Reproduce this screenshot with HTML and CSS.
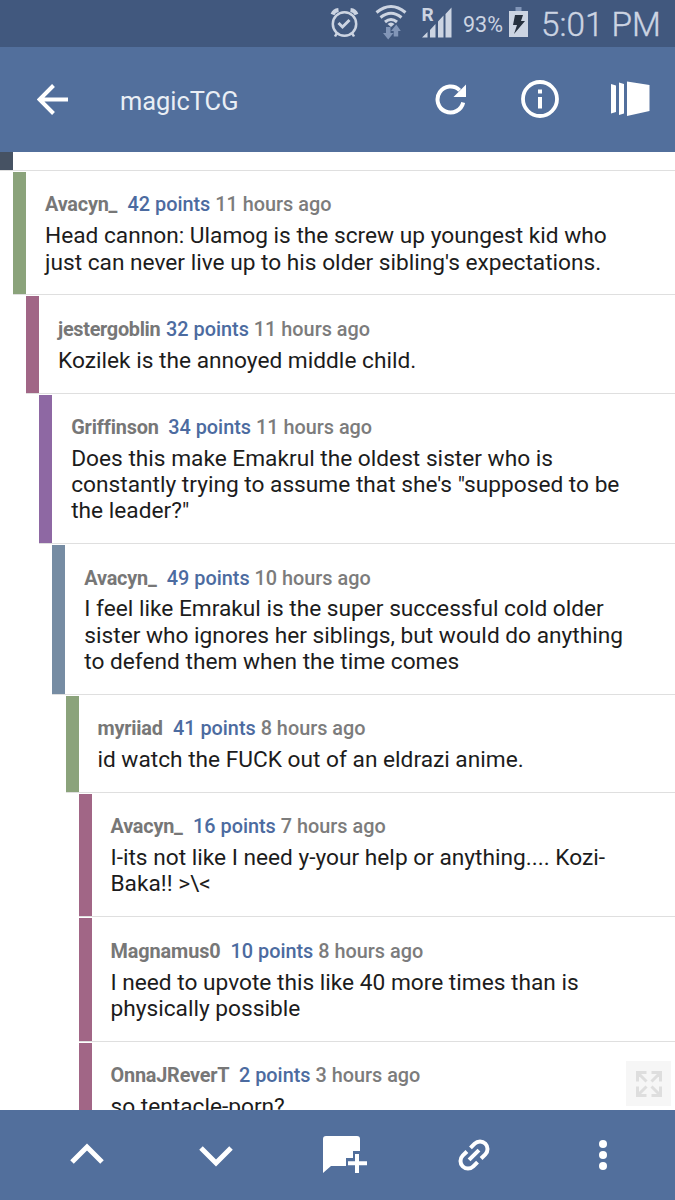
FILE: index.html
```html
<!DOCTYPE html>
<html lang="en">
<head>
<meta charset="utf-8">
<title>magicTCG</title>
<link rel="stylesheet" href="styles.css">
</head>
<body>
<div class="screen">
  <div class="status">
    <svg class="status-icons" width="136" height="47" viewBox="0 0 136 47" fill="none">
      <g stroke="#ccd4e2" stroke-width="2.5">
        <circle cx="24.500" cy="24" r="11.700"/>
        <path d="M18.500 23l4 4 7-7" stroke-width="3"/>
        <path d="M17 33l-2 3.500M32 33l2 3.500"/>
        <path d="M12.500 14.500q1.500-4 6-4.500M30.500 10q4.500.5 6 4.500" stroke-width="4"/>
        <path d="M56.500 12.500q14.500-12 29 0M60.500 17.500q10.500-8.500 21 0M65 22q6-5 12 0" stroke-width="3"/>
      </g>
      <path d="M67.500 24q3.500-3 7 0l-3.500 3z" fill="#ccd4e2"/>
      <path d="M66 27h4.500v6h3l-5.300 6.500-5.200-6.500h3zM76.300 24.500l4.500 6.500h-2.600v5.500h-4.500V31H71z" fill="#8296b8"/>
      <path d="M102 37.500l5.500-5.500v5.500zM110 30l5.500-6v13.500h-5.500zM118 21.500l5.500-6v22h-5.500zM125.500 14l6-6.500v30h-6z" fill="#ccd4e2"/>
      <text x="101.500" y="20.500" class="roaming">R</text>
    </svg>
    <span class="percent">93%</span>
    <svg class="battery" width="20" height="32" viewBox="0 0 20 32"><path d="M6.500 0h6v4h-6z" fill="#8296b8"/><path d="M0 4h19v26H0z" fill="#ccd4e2"/><path d="M6 8h8l-2 6h4L5 27l3-9H4z" fill="#26303e"/></svg>
    <span class="clock">5:01 PM</span>
  </div>
  <header class="topbar">
    <svg class="back" width="32" height="32" viewBox="0 0 32 32" fill="none" stroke="#fff" stroke-width="4"><path d="M31 15.500H4M16.500 1.500l-14 14 14 14"/></svg>
    <h1 class="title">magicTCG</h1>
    <svg class="refresh" width="32" height="32" viewBox="0 0 32 32"><path d="M28.200 18.500A13 13 0 1 1 24.700 6.300" fill="none" stroke="#fff" stroke-width="4"/><path d="M31 .5V13H18.500z" fill="#fff"/></svg>
    <svg class="info" width="38" height="38" viewBox="0 0 38 38"><circle cx="19" cy="19" r="17" fill="none" stroke="#fff" stroke-width="3.800"/><path d="M17 9.500h4v4h-4zM17 17h4v11.500h-4z" fill="#fff"/></svg>
    <svg class="pages" width="39" height="36" viewBox="0 0 39 36" fill="#fff"><path d="M0 3l5 1.500V31l-5 1.500zM8 1.500l5 1.500v29.500L8 34zM16 .5L38.500 4v26L16 35z"/></svg>
  </header>
  <main class="thread">
    <div class="tail"><i class="bar slate"></i></div>
    <article class="comment d1"><i class="bar green"></i><div class="content"><p class="meta"><b class="name n1">Avacyn_</b><span class="points">42 points</span> 11 hours ago</p><p class="text">Head cannon: Ulamog is the screw up youngest kid who<br>just can never live up to his older sibling's expectations.</p></div></article>
    <article class="comment d2"><i class="bar rose"></i><div class="content"><p class="meta"><b class="name n2">jestergoblin</b><span class="points">32 points</span> 11 hours ago</p><p class="text">Kozilek is the annoyed middle child.</p></div></article>
    <article class="comment d3"><i class="bar violet"></i><div class="content"><p class="meta"><b class="name n3">Griffinson</b><span class="points">34 points</span> 11 hours ago</p><p class="text">Does this make Emakrul the oldest sister who is<br>constantly trying to assume that she's "supposed to be<br>the leader?"</p></div></article>
    <article class="comment d4"><i class="bar blue"></i><div class="content"><p class="meta"><b class="name n1">Avacyn_</b><span class="points">49 points</span> 10 hours ago</p><p class="text">I feel like Emrakul is the super successful cold older<br>sister who ignores her siblings, but would do anything<br>to defend them when the time comes</p></div></article>
    <article class="comment d5"><i class="bar green"></i><div class="content"><p class="meta"><b class="name n4">myriiad</b><span class="points">41 points</span> 8 hours ago</p><p class="text">id watch the FUCK out of an eldrazi anime.</p></div></article>
    <article class="comment d6"><i class="bar rose"></i><div class="content"><p class="meta"><b class="name n1">Avacyn_</b><span class="points">16 points</span> 7 hours ago</p><p class="text">I-its not like I need y-your help or anything.... Kozi-<br>Baka!! &gt;\&lt;</p></div></article>
    <article class="comment d6"><i class="bar rose"></i><div class="content"><p class="meta"><b class="name n5">Magnamus0</b><span class="points">10 points</span> 8 hours ago</p><p class="text">I need to upvote this like 40 more times than is<br>physically possible</p></div></article>
    <article class="comment d6"><i class="bar rose"></i><div class="content"><p class="meta"><b class="name n6">OnnaJReverT</b><span class="points">2 points</span> 3 hours ago</p><p class="text">so tentacle-porn?</p></div></article>
    <div class="expand"><svg width="26" height="26" viewBox="0 0 26 26" fill="none" stroke="#dedede" stroke-width="3"><path d="M1.500 10.500v-9h9M1.500 1.500l9 9M15.500 1.500h9v9M24.500 1.500l-9 9M1.500 15.500v9h9M1.500 24.500l9-9M15.500 24.500h9v-9M24.500 24.500l-9-9"/></svg></div>
  </main>
  <nav class="bottombar">
    <svg width="36" height="22" viewBox="0 0 36 22" class="up"><path d="M3 19L18 4l15 15" fill="none" stroke="#fff" stroke-width="5"/></svg>
    <svg width="36" height="22" viewBox="0 0 36 22" class="down"><path d="M3 3l15 15L33 3" fill="none" stroke="#fff" stroke-width="5"/></svg>
    <svg width="44" height="38" viewBox="0 0 44 38" class="reply" fill="#fff"><path d="M3 0h31q3 0 3 3v12h-7v7h-7v8H8l-8 7V3q0-3 3-3zM32 18h4v7.200h8v4h-8V37h-4v-7.800h-7v-4h7z"/></svg>
    <svg width="34" height="34" viewBox="0 0 34 34" class="link" fill="none" stroke="#fff" stroke-width="4"><g transform="translate(17 17) rotate(-45)"><path d="M-2.500-7.500h-6a7.500 7.500 0 0 0 0 15h6M2.500-7.500h6a7.500 7.500 0 0 1 0 15h-6M-7 0H7"/></g></svg>
    <svg width="8" height="30" viewBox="0 0 8 30" class="more" fill="#fff"><circle cx="4" cy="4" r="4"/><circle cx="4" cy="15" r="4"/><circle cx="4" cy="26" r="4"/></svg>
  </nav>
</div>
</body>
</html>
```
FILE: styles.css
```css
* { box-sizing: border-box; }
body, h1, p { margin: 0; }
body { font-family: Roboto, sans-serif; background: #fff; }
svg { display: block; flex: none; }
.screen { display: flex; flex-direction: column; width: 675px; height: 1200px; overflow: hidden; }
.status { flex: none; display: flex; height: 47px; padding-left: 320px; background: #41587e; color: #ccd4e2; white-space: nowrap; }
.roaming { font: 700 19px Roboto, sans-serif; fill: #ccd4e2; }
.percent { width: 47px; padding-left: 7px; font-size: 21.500px; line-height: 49px; }
.battery { margin: 7px 0 0 6px; }
.clock { margin-left: 12px; font-size: 33.300px; font-weight: 300; line-height: 50px; -webkit-text-stroke: .4px #ccd4e2; }
.topbar { flex: none; display: flex; align-items: center; height: 105px; padding: 0 25px 0 37px; background: #526f9c; }
.title { width: 318px; margin-left: 51px; padding-top: 2px; font-size: 25.400px; font-weight: 400; line-height: 30px; color: #e9eef5; }
.info { position: relative; top: -1px; margin-left: 54px; }
.pages { position: relative; top: -1px; margin-left: 52px; }
.thread { position: relative; flex: none; height: 958px; overflow: hidden; }
.tail { display: flex; height: 19px; border-bottom: 1px solid #dfdfdf; }
.bar { flex: none; width: 13.100px; }
.slate { background: #465263; }
.green { background: #8ba37b; }
.rose { background: #a16686; }
.violet { background: #8e68a3; }
.blue { background: #768ca3; }
.comment { display: flex; padding-top: 1px; border-bottom: 1px solid #dfdfdf; }
.d1 { margin-left: 13.100px; }
.d2 { margin-left: 26.200px; }
.d3 { margin-left: 39.300px; }
.d4 { margin-left: 52.400px; }
.d5 { margin-left: 65.500px; }
.d6 { margin-left: 78.600px; }
.content { padding: 20.400px 0 18.600px 18.800px; white-space: nowrap; }
.meta { height: 30.900px; font-size: 19.850px; line-height: 26px; font-weight: 500; color: #7c7c7c; }
.name { display: inline-block; font-weight: 700; letter-spacing: -.2px; color: #777; }
.n1 { width: 82.500px; }
.n2 { width: 108px; letter-spacing: -.3px; }
.n3 { width: 97px; letter-spacing: -.15px; }
.n4 { width: 75.500px; }
.n5 { width: 120px; letter-spacing: -.1px; }
.n6 { width: 128.500px; }
.points { color: #4c6ba0; }
.text { font-size: 22.700px; line-height: 26.250px; color: #1c1c1c; }
.expand { position: absolute; right: 4px; bottom: 4px; display: grid; place-items: center; width: 45px; height: 45px; background: #f6f6f6; }
.bottombar { flex: 1; display: flex; align-items: flex-start; padding-left: 69px; background: #526f9c; }
.up { margin-top: 33px; }
.down { margin: 35px 0 0 93px; }
.reply { margin: 26px 0 0 89px; }
.link { margin: 28px 0 0 90px; }
.more { margin: 30px 0 0 108px; }
```
